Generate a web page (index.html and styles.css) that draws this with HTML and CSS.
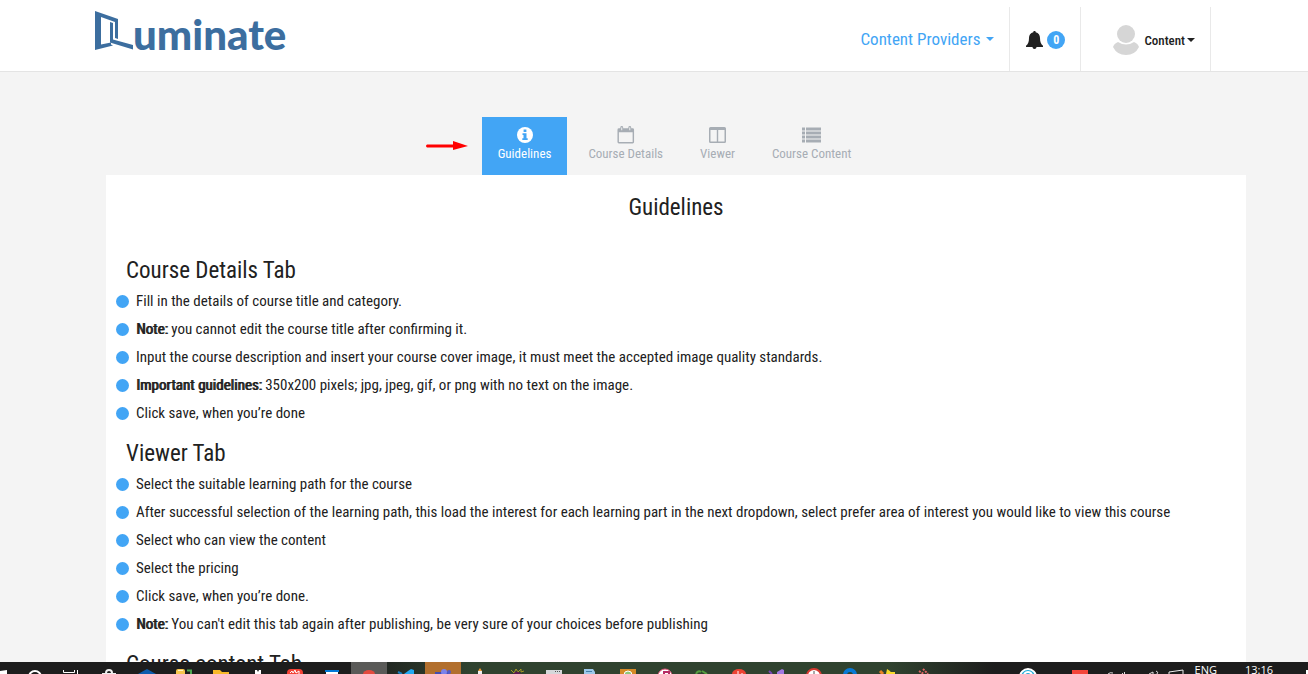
FILE: index.html
```html
<!DOCTYPE html>
<html lang="en">
<head>
<meta charset="utf-8">
<title>Luminate - Content Providers</title>
<link rel="stylesheet" href="styles.css">
</head>
<body>
<header class="topbar">
  <a class="logo" href="#" aria-label="Luminate">
    <svg class="logo-mark" width="38" height="40" viewBox="0 0 38 40" aria-hidden="true">
      <path fill="#3c6e9f" fill-rule="evenodd" d="M0 0 L23 8 V28 L20 27 V11 L6 6 V33.500 L16 31.500 V33.500 L18 34.500 L0 39 Z"/>
      <path fill="#3c6e9f" d="M15 11 L18 12 V28.500 L38 34 V38.500 L15 31.500 Z"/>
    </svg>
    <span class="logo-text">uminate</span>
  </a>
  <nav class="topnav">
    <button class="providers" type="button">Content Providers <span class="caret"></span></button>
    <button class="alerts" type="button" aria-label="Notifications">
      <svg width="17" height="18" viewBox="0 0 17 18" aria-hidden="true"><path fill="#212121" d="M8.500 0c.8 0 1.200.5 1.200 1.300C12.500 2 14 4 14 7c0 4 1 6.200 3 7.700V16H0v-1.300C2 13.200 3 11 3 7c0-3 1.500-5 4.300-5.700C7.300.5 7.700 0 8.500 0ZM6.500 16h4c0 1.200-.8 2-2 2s-2-.8-2-2Z"/></svg>
      <span class="badge">0</span>
    </button>
    <button class="account" type="button">
      <svg width="26" height="30" viewBox="0 0 26 30" aria-hidden="true"><circle cx="13" cy="9" r="9" fill="#d6d6d6"/><path fill="#d6d6d6" d="M5 17q8 5 16 0 4 1.500 5 5-4 8-13 8T0 22q1-3.500 5-5Z"/></svg>
      <span>Content</span><span class="caret"></span>
    </button>
  </nav>
</header>

<main class="page">
  <div class="tabs-row">
    <nav class="tabs" role="tablist">
      <svg class="pointer" width="42" height="10" viewBox="0 0 42 10" aria-hidden="true"><path fill="#f00" d="M1 3.500H27V0L42 5 27 9V6.500H1Q-1 5 1 3.500Z"/></svg>
      <button class="tab active" type="button" role="tab" aria-selected="true">
        <svg width="16" height="16" viewBox="0 0 16 16" aria-hidden="true"><circle cx="8" cy="8" r="8" fill="currentColor"/><path fill="#42a5f5" d="M6.600 2.500h2.800V5H6.600ZM5.500 6.300h4v5h1.200V13H5.300v-1.700h1.200V8h-1Z"/></svg>
        <span>Guidelines</span>
      </button>
      <button class="tab" type="button" role="tab">
        <svg width="18" height="19" viewBox="0 0 18 19" aria-hidden="true"><path fill="currentColor" fill-rule="evenodd" d="M1.500 2.500H3V1.500Q3 0 4.500 0T6 1.500v1h5.500v-1Q11.500 0 13 0t1.500 1.500v1H16Q17.500 2.500 17.500 4v13q0 1.500-1.500 1.500H1.500Q0 18.500 0 17V4Q0 2.500 1.500 2.500ZM1.500 6.500V17H16V6.500Z"/><path d="M4.500 1.500v3M13 1.500v3" stroke="#f4f4f4"/></svg>
        <span>Course Details</span>
      </button>
      <button class="tab" type="button" role="tab">
        <svg width="18" height="16" viewBox="0 0 18 16" aria-hidden="true"><path fill="currentColor" fill-rule="evenodd" d="M1.500 0h14Q17 0 17 1.500v13q0 1.500-1.500 1.500h-14Q0 16 0 14.500v-13Q0 0 1.500 0ZM1.500 3v11.500h6.300V3ZM9.200 3v11.500h6.300V3Z"/></svg>
        <span>Viewer</span>
      </button>
      <button class="tab" type="button" role="tab">
        <svg width="19" height="15" viewBox="0 0 19 15" aria-hidden="true"><path fill="currentColor" d="M0 0h3v3H0ZM4 0h15v3H4ZM0 4h3v3H0ZM4 4h15v3H4ZM0 8h3v3H0ZM4 8h15v3H4ZM0 12h3v3H0ZM4 12h15v3H4Z"/></svg>
        <span>Course Content</span>
      </button>
    </nav>
  </div>

  <section class="panel">
    <h1 class="panel-title">Guidelines</h1>
    <h2 class="section-title">Course Details Tab</h2>
    <ul class="steps">
      <li>Fill in the details of course title and category.</li>
      <li><strong>Note:</strong> you cannot edit the course title after confirming it.</li>
      <li>Input the course description and insert your course cover image, it must meet the accepted image quality standards.</li>
      <li><strong>Important guidelines:</strong> 350x200 pixels; jpg, jpeg, gif, or png with no text on the image.</li>
      <li>Click save, when you’re done</li>
    </ul>
    <h2 class="section-title">Viewer Tab</h2>
    <ul class="steps">
      <li>Select the suitable learning path for the course</li>
      <li>After successful selection of the learning path, this load the interest for each learning part in the next dropdown, select prefer area of interest you would like to view this course</li>
      <li>Select who can view the content</li>
      <li>Select the pricing</li>
      <li>Click save, when you’re done.</li>
      <li><strong>Note:</strong> You can't edit this tab again after publishing, be very sure of your choices before publishing</li>
    </ul>
    <h2 class="section-title">Course content Tab</h2>
  </section>
</main>

<footer class="taskbar">
  <svg class="apps" width="940" height="12" viewBox="0 0 940 12" aria-hidden="true">
    <path fill="#5a5a58" d="M351 0h36v12h-36Z"/><path fill="#b26f2d" d="M425 0h36v12h-36Z"/>
    <path fill="#fff" d="M0 9l7-1v4H0Z"/>
    <circle cx="35" cy="15" r="6" fill="none" stroke="#fff" stroke-width="2"/>
    <path d="M63.500 8v2.500h11V8M77.500 8v4" fill="none" stroke="#fff"/>
    <path fill="#eee" d="M102 11h14v1h-14Z"/><path d="M106 11q0-3 3-3t3 3" fill="none" stroke="#eee" stroke-width="2"/>
    <path fill="#0c5cad" d="M138 12l9-5 9 5Z"/>
    <rect x="176" y="7" width="9" height="7" rx="2" fill="#f6c64f"/><path fill="#fff2c2" d="M178 8h5v1h-5Z"/><path d="M187 8.500h4V12" fill="none" stroke="#4da852" stroke-width="2"/>
    <path fill="#f7b928" d="M213 8h7l2 2h7v2h-16Z"/>
    <path fill="#fff" d="M255 8h2l1 2 1-2h2v4h-6Z"/>
    <rect x="287" y="7" width="16" height="10" rx="4" fill="#f34235"/><path d="M290 11l2-2 1 2 2-3 1 3 3-2v3" fill="none" stroke="#fff"/>
    <path fill="#0078d7" d="M325 8h14v2h-14Z"/><path fill="#fff" d="M326 10h12v2h-12Z"/>
    <ellipse cx="369" cy="12" rx="6" ry="4" fill="#e34a3e"/>
    <path fill="#23a9f2" d="M408 9l3-2 3 1v4h-10Z"/><path d="M398 10l4 2" stroke="#1680c4" stroke-width="2"/>
    <path fill="#444db0" d="M435 10h14v2h-14Z"/><circle cx="444" cy="10" r="3" fill="#7b83eb"/><circle cx="449" cy="10" r="2" fill="#5059c9"/>
    <path fill="#f09a37" d="M480 6l2 3h-4Z"/><path fill="#eee" d="M478 9h4v3h-4Z"/>
    <path d="M511 8l3 3 2-4 2 3 3-3v3l3-1" fill="none" stroke="#a69a27"/><path fill="#5c194e" d="M513 12q4-5 8 0Z"/>
    <path fill="#d5d8da" d="M546 8h16v4h-16Z"/><path d="M555 9.500h6" stroke="#555" stroke-dasharray="1"/>
    <path fill="#9bc8e9" d="M584 7h9l2 3v2h-11Z"/><path d="M586 9.500h6" stroke="#467fa8"/>
    <path fill="#d58a27" d="M620 7h16v5h-16Z"/><circle cx="628" cy="13" r="4" fill="#8fc87b" stroke="#fff"/>
    <circle cx="665" cy="14" r="7" fill="#fff" stroke="#e25377"/><path d="M664 12v-2h5v2" fill="none" stroke="#b62d65" stroke-width="2"/>
    <path d="M696 12q2-4 5-2M702 9l5 3" fill="none" stroke="#559e40" stroke-width="2"/>
    <ellipse cx="739" cy="12" rx="7" ry="5" fill="#ec4333"/><path d="M738 9v3M742 11v1" stroke="#fff"/>
    <path fill="#a179e2" d="M777 10l5-3 2 1v4h-7Z"/><path d="M769 9l3 3" stroke="#7948ba" stroke-width="2"/>
    <circle cx="814" cy="14" r="7" fill="#fff" stroke="#d83a31" stroke-width="2"/><path d="M814 12v-3" stroke="#555"/>
    <circle cx="850" cy="13" r="5" fill="none" stroke="#0879d5" stroke-width="4"/>
    <path fill="#f7d92a" d="M887 7l3 2 2 3h-6Z"/><path d="M880 9l3 3" stroke="#e88323" stroke-width="3"/><path fill="#f7d92a" d="M889 10h6v2h-6Z"/>
    <path d="M919 9l5 3M923 7l5 5" stroke="#e36767" stroke-width="2" stroke-dasharray="2 1"/>
  </svg>
  <div class="tray">
    <svg width="170" height="12" viewBox="0 0 170 12" aria-hidden="true">
      <circle cx="13" cy="15" r="8" fill="#1eaad8" stroke="#fff" stroke-width="2"/><path d="M9 12q4-4 8 0" fill="none" stroke="#fff" stroke-width="2"/>
      <path fill="#f4453a" d="M57 8h16v4H57Z"/>
      <path d="M93 12q2-2 5-1M107.500 11v1M109.500 10v2M134 12l4-2v2M141 9q3 1 1 3" fill="none" stroke="#ddd"/>
      <path d="M154 12v-2l14-2v4" fill="none" stroke="#eee"/>
    </svg>
    <span class="lang">ENG</span>
    <time class="clock">13:16</time>
    <span class="notice"></span>
  </div>
</footer>
</body>
</html>
```
FILE: styles.css
```css
* { box-sizing: border-box; }

body {
  margin: 0;
  height: 100vh;
  display: flex;
  flex-direction: column;
  overflow: hidden;
  background: #f4f4f4;
  color: #212121;
  font-family: "Roboto Condensed", "Liberation Sans Narrow", Roboto, sans-serif;
  font-size: 15px;
}

button {
  border: 0;
  padding: 0;
  background: none;
  color: inherit;
  font: inherit;
  cursor: pointer;
}

svg { display: block; flex: none; }

/* Header */
.topbar {
  flex: none;
  display: flex;
  justify-content: space-between;
  padding: 7px 97px 0 95px;
  background: #fff;
  border-bottom: 1px solid #e4e4e4;
}

.logo {
  display: flex;
  align-items: flex-start;
  padding-top: 4px;
  color: #3c6e9f;
  text-decoration: none;
}

.logo-text {
  font: 900 42px/46px Lato, sans-serif;
}

.topnav { display: flex; height: 64px; }

.topnav button {
  display: flex;
  align-items: center;
  border-right: 1px solid #e9e9e9;
}

.caret {
  border: 4px solid transparent;
  border-top-color: currentColor;
  border-bottom: 0;
}

.topnav .providers {
  gap: 6px;
  padding-right: 15px;
  color: #42a5f5;
  font-size: 17px;
}

.topnav .alerts { gap: 4px; padding: 2px 15px 0 16px; }

.badge {
  width: 18px;
  border-radius: 9px;
  background: #42a5f5;
  color: #fff;
  font-size: 12px;
  font-weight: bold;
  line-height: 18px;
}

.topnav .account {
  gap: 5px;
  padding: 2px 15px 0 32px;
  font-size: 13px;
  font-weight: 500;
}

.account .caret { margin-left: -3px; }

/* Tabs */
.page {
  flex: 1;
  min-height: 0;
  overflow: hidden;
  padding: 45px 62px 0 106px;
}

.tabs-row { display: flex; justify-content: center; padding-right: 3px; }

.tabs { position: relative; display: flex; gap: 5px; }

.pointer {
  position: absolute;
  top: 24px;
  right: 100%;
  margin-right: 14px;
}

.tab {
  display: flex;
  flex-direction: column;
  align-items: center;
  justify-content: flex-end;
  gap: 1px;
  height: 58px;
  padding: 0 16px 12px;
  color: #a7adb4;
  font-size: 13px;
  line-height: 18px;
}

.tab svg { height: 18px; }

.tab.active { background: #42a5f5; color: #fff; }

/* Guidelines */
.panel {
  padding: 15px 10px 40px;
  background: #fff;
}

.panel-title,
.section-title {
  margin: 0;
  padding-top: 2px;
  font-size: 23px;
  font-weight: 400;
  line-height: 32px;
}

.panel-title { margin-bottom: 29px; text-align: center; }

.section-title { padding-left: 10px; }

.steps {
  margin: 0 0 9px;
  padding: 0;
  list-style: none;
}

.steps li {
  display: flow-root;
  line-height: 28px;
}

.steps strong {
  font-weight: 400;
  text-shadow: 1px 0 currentColor;
}

.steps li::before {
  content: "";
  float: left;
  width: 13px;
  height: 13px;
  margin: 8px 7px 0 0;
  border-radius: 50%;
  background: #42a5f5;
}

/* Desktop taskbar */
.taskbar {
  flex: none;
  display: flex;
  justify-content: space-between;
  height: 12px;
  overflow: hidden;
  background: linear-gradient(90deg, #1d1d1d 27%, #30432f 36%, #30432f 68%, #1d1d1d 76%);
}

.tray {
  display: flex;
  color: #fff;
  font: 11px/16px "Open Sans", sans-serif;
}

.lang { margin-left: 10px; }
.clock { margin-left: 28px; }

.notice {
  width: 2px;
  height: 4px;
  margin: 8px 0 0 33px;
  background: #fff;
}
```
